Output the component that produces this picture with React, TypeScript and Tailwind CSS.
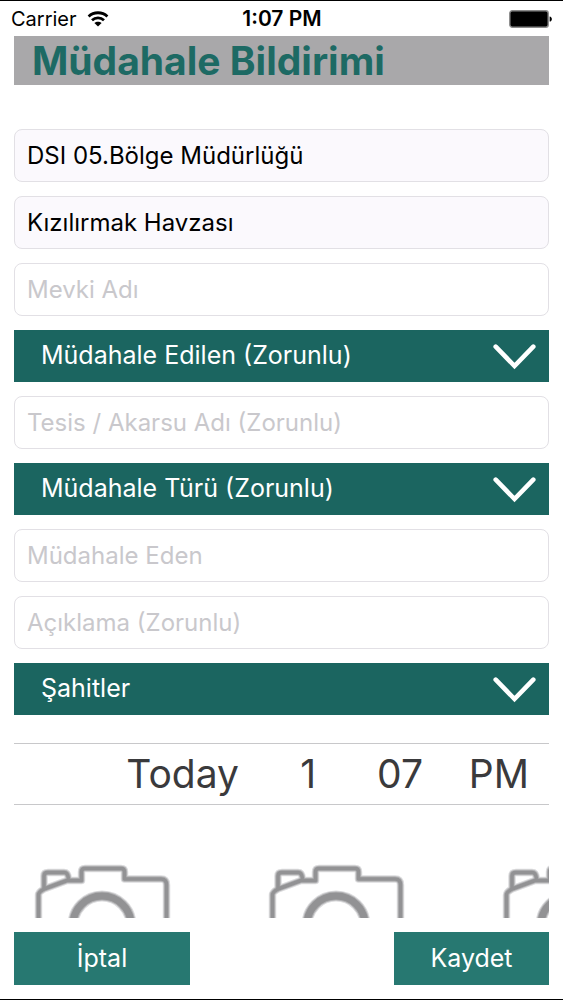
import { useState } from "react";

type FieldProps = {
  label: string;
  value?: string;
};

type DropdownProps = {
  label: string;
  options: string[];
};

type WheelProps = {
  label: string;
  options: string[];
  className: string;
};

function Field({ label, value = "" }: FieldProps) {
  const [text, setText] = useState(value);

  return (
    <input
      type="text"
      aria-label={label}
      placeholder={label}
      value={text}
      onChange={(e) => setText(e.target.value)}
      className="block h-[53px] w-full rounded-lg border border-[#e2e0e5] bg-[#fbf9fd] px-3 text-2xl text-black placeholder:text-[#c9c8cc] placeholder-shown:bg-white focus:outline-none"
    />
  );
}

function Dropdown({ label, options }: DropdownProps) {
  return (
    <div className="relative">
      <select
        aria-label={label}
        className="block h-[52px] w-full appearance-none bg-[#1b6560] pr-16 pl-[27px] text-[25px] text-white focus:outline-none"
      >
        <option>{label}</option>
        {options.map((option) => (
          <option key={option}>{option}</option>
        ))}
      </select>
      <svg
        viewBox="0 0 44 26"
        className="pointer-events-none absolute top-3.5 right-3 h-[26px] w-11"
        fill="none"
        stroke="white"
        strokeWidth="4.6"
        strokeLinecap="round"
        aria-hidden="true"
      >
        <path d="M2.7 2.7 L21.5 22 L40.3 2.7" strokeLinejoin="miter" />
      </svg>
    </div>
  );
}

function Wheel({ label, options, className }: WheelProps) {
  return (
    <select
      aria-label={label}
      className={`appearance-none bg-transparent text-right [text-align-last:right] focus:outline-none ${className}`}
    >
      {options.map((option) => (
        <option key={option}>{option}</option>
      ))}
    </select>
  );
}

function WifiIcon() {
  return (
    <svg viewBox="0 0 22 16" className="h-4 w-[22px]" fill="none" stroke="black" strokeWidth="2.8" aria-hidden="true">
      <path d="M1.6 5.4 C6.8 0.5 15.2 0.5 20.4 5.4" />
      <path d="M5 9.2 C8.4 6 13.6 6 17 9.2" />
      <path d="M7.4 12 C9.4 10.2 12.6 10.2 14.6 12 L11 15.6 Z" fill="black" stroke="none" />
    </svg>
  );
}

function BatteryIcon() {
  return (
    <svg viewBox="0 0 44 18" className="h-[18px] w-11" aria-hidden="true">
      <rect x="0.8" y="0.8" width="38.4" height="16.4" rx="2.5" fill="black" stroke="#8a8a8a" strokeWidth="1.4" />
      <path d="M40.6 6.4 C43.6 6.8 43.6 11.2 40.6 11.6 Z" fill="black" />
    </svg>
  );
}

// outline is stacked from light to dark so the edges stay soft
const cameraLayers = [
  { color: "#dcdcde", line: 7.5, ring: 11 },
  { color: "#b2b2b4", line: 5.5, ring: 9 },
  { color: "#929294", line: 3.5, ring: 7 },
];

function CameraIcon() {
  return (
    <svg viewBox="0 0 234 120" className="h-[120px] w-[234px]" fill="none" aria-hidden="true">
      {cameraLayers.map(({ color, line, ring }) => (
        <g key={color} stroke={color} strokeWidth={line} strokeLinejoin="round">
          <path d="M24.5 92 V35 Q24.5 32 30 29 L53 20.5 H67.5 V12 Q67.5 8.5 71 8.5 H107 Q110.5 8.5 110.5 12 V19 H147 Q152.5 19 152.5 25 V92 Q152.5 98 146 98 H30 Q24.5 98 24.5 92 Z" />
          <path d="M30 28 V16 Q30 12.5 34 12.5 H50 Q54 12.5 54.5 19" />
          <circle cx="88" cy="65" r="29" strokeWidth={ring} />
        </g>
      ))}
    </svg>
  );
}

export default function App() {
  return (
    <div className="flex h-screen flex-col border-y border-black bg-white font-[Inter,'Noto_Sans',sans-serif] text-black">
      <div className="grid h-[35px] shrink-0 grid-cols-[1fr_auto_1fr] items-center pr-2.5 pl-[11px]">
        <div className="flex items-center gap-2.5 text-xl">
          <span>Carrier</span>
          <WifiIcon />
        </div>
        <span className="text-[21px] font-semibold">1:07 PM</span>
        <div className="flex justify-end">
          <BatteryIcon />
        </div>
      </div>

      <form className="flex min-h-0 flex-1 flex-col px-3.5" onSubmit={(e) => e.preventDefault()}>
        <h1 className="h-[49px] shrink-0 bg-[#a9a8aa] pl-[18px] text-[39px] leading-[49px] font-bold text-[#1d6a64]">
          Müdahale Bildirimi
        </h1>

        <div className="mt-11 flex shrink-0 flex-col gap-3.5">
          <Field label="Bölge" value="DSI 05.Bölge Müdürlüğü" />
          <Field label="Havza" value="Kızılırmak Havzası" />
          <Field label="Mevki Adı" />
          <Dropdown label="Müdahale Edilen (Zorunlu)" options={["Tesis", "Akarsu"]} />
          <Field label="Tesis / Akarsu Adı (Zorunlu)" />
          <Dropdown label="Müdahale Türü (Zorunlu)" options={["Kirlilik", "Yapı"]} />
          <Field label="Müdahale Eden" />
          <Field label="Açıklama (Zorunlu)" />
          <Dropdown label="Şahitler" options={["Şahit Ekle"]} />
        </div>

        <div className="mt-7 flex h-[62px] shrink-0 border-y border-[#c8c8ca] pr-5 text-[39px] text-[#3a3a3c]">
          <Wheel label="Gün" options={["Today"]} className="min-w-0 flex-1" />
          <Wheel label="Saat" options={["1", "2", "3"]} className="w-[77px]" />
          <Wheel label="Dakika" options={["07", "08", "09"]} className="w-[107px]" />
          <Wheel label="AM/PM" options={["PM", "AM"]} className="w-[106px]" />
        </div>

        <div className="flex min-h-0 flex-1 overflow-hidden pt-[55px]">
          {[1, 2, 3].map((photo) => (
            <button key={photo} type="button" aria-label={`Fotoğraf ${photo}`} className="h-[120px] shrink-0">
              <CameraIcon />
            </button>
          ))}
        </div>

        <div className="flex shrink-0 justify-between py-3.5 text-[25px] text-white">
          <button type="button" className="h-[53px] w-44 bg-[#277871]">
            İptal
          </button>
          <button type="submit" className="h-[53px] w-[155px] bg-[#277871]">
            Kaydet
          </button>
        </div>
      </form>
    </div>
  );
}
